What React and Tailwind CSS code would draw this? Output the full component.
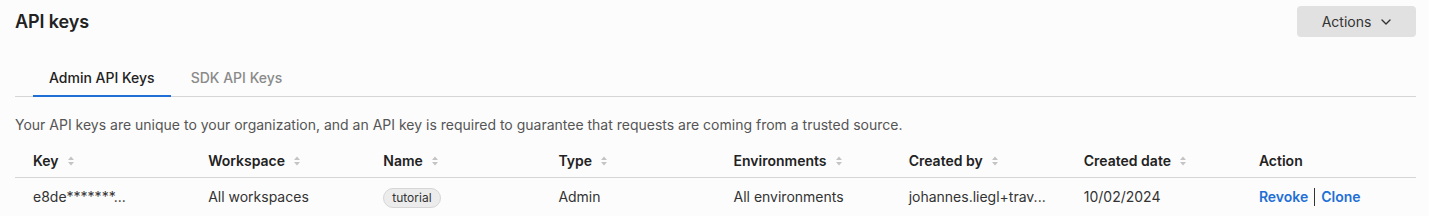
import React from 'react';

const columns = ['Key', 'Workspace', 'Name', 'Type', 'Environments', 'Created by', 'Created date', 'Action'];

const SortIcon = () => (
  <svg width="8" height="12" viewBox="0 0 8 12" className="ml-2 inline-block">
    <path d="M4 1.5 L7 5 H1 Z" fill="#c4c4c4" />
    <path d="M4 10.5 L7 7 H1 Z" fill="#c4c4c4" />
  </svg>
);

const ChevronDown = () => (
  <svg width="10" height="6" viewBox="0 0 10 6" className="ml-2.5">
    <path d="M1 1 L5 5 L9 1" stroke="#333" strokeWidth="1.4" fill="none" strokeLinecap="round" strokeLinejoin="round" />
  </svg>
);

const App = () => {
  return (
    <div className="min-h-[216px] bg-[#fcfcfc] text-[#222] font-['Inter','Liberation_Sans',sans-serif]">
      <div className="pl-[15px] pr-[13px] pt-[6px]">
        <div className="flex items-center justify-between">
          <h1 className="text-[18px] font-semibold leading-[31px] tracking-[-0.1px]">API keys</h1>
          <button className="inline-flex items-center h-[31px] w-[119px] justify-center rounded-[4px] bg-[#e1e1e1] text-[14px] text-[#333]">
            Actions <ChevronDown />
          </button>
        </div>

        {/* Tabs */}
        <div className="mt-[18px] flex border-b border-[#d6d6d6]">
          <div className="ml-[18px] px-4 pb-[7px] pt-[12px] text-[14px] font-medium text-[#222] border-b-2 border-[#1f6fd6] -mb-px">
            Admin API Keys
          </div>
          <div className="ml-1 px-4 pb-[7px] pt-[12px] text-[14px] font-medium text-[#8a8a8a]">
            SDK API Keys
          </div>
        </div>

        <p className="mt-[18px] text-[14px] text-[#555] leading-[20px]">
          Your API keys are unique to your organization, and an API key is required to guarantee that requests are coming from a trusted source.
        </p>

        {/* Table */}
        <div className="mt-[9px]">
          <div className="grid grid-cols-8 border-b border-[#d6d6d6] h-[34px] items-center">
            {columns.map(col => (
              <div key={col} className="pl-[18px] text-[14px] font-semibold text-[#222] flex items-center">
                {col}
                {col !== 'Action' && <SortIcon />}
              </div>
            ))}
          </div>
          <div className="grid grid-cols-8 h-[37px] items-center text-[14px] text-[#333]">
            <div className="pl-[18px]">e8de*******...</div>
            <div className="pl-[18px]">All workspaces</div>
            <div className="pl-[18px]">
              <span className="inline-block rounded-full border border-[#d6d6d6] bg-[#ececec] px-[8px] text-[12px] leading-[18px] text-[#333]">tutorial</span>
            </div>
            <div className="pl-[18px]">Admin</div>
            <div className="pl-[18px]">All environments</div>
            <div className="pl-[18px]">johannes.liegl+trav...</div>
            <div className="pl-[18px]">10/02/2024</div>
            <div className="pl-[18px] flex items-center font-semibold text-[#1f6fd6]">
              <span>Revoke</span>
              <span className="mx-[6px] inline-block h-[18px] w-px bg-[#333]" />
              <span>Clone</span>
            </div>
          </div>
        </div>
      </div>
    </div>
  );
};

export default App;
